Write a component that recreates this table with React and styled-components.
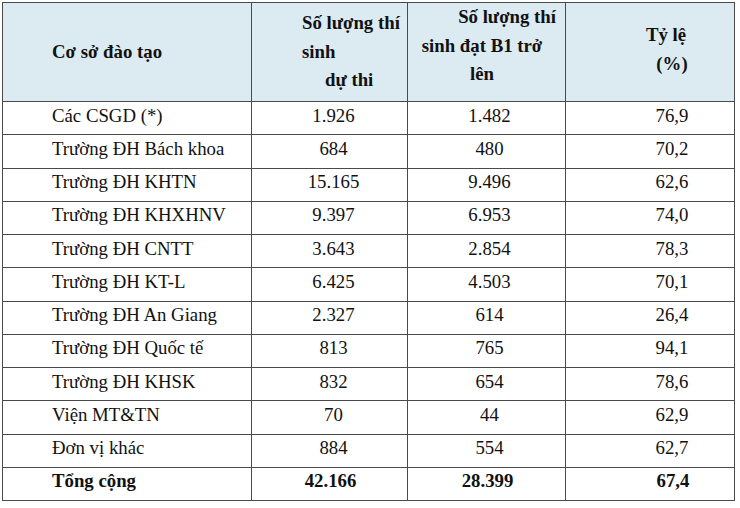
import React from 'react'
import styled, { createGlobalStyle } from 'styled-components'

const GlobalStyle = createGlobalStyle`
  body {
    margin: 0;
    background: #fff;
    font-family: "Liberation Serif", "Times New Roman", serif;
    color: #111;
  }
`

const Page = styled.div`
  padding: 2px 0 0 2px;
`

const Table = styled.table`
  border-collapse: collapse;
  table-layout: fixed;
  width: 732px;
  font-size: 18.8px;
  border: 1px solid #7a7a7a;
`

const HeadRow = styled.tr`
  height: 99px;
  background: #dceaf2;
`

const BodyRow = styled.tr`
  height: 33.25px;
  font-weight: ${({ total }) => total ? 700 : 400};
`

const HeadCell = styled.th`
  border: 1px solid #4a4a4a;
  font-weight: 700;
  padding: ${({ pad }) => pad || '0'};
  vertical-align: ${({ top }) => top ? 'top' : 'middle'};
  text-align: ${({ align }) => align || 'left'};
  line-height: 28.5px;
`

const HeadLines = styled.div`
  display: flex;
  flex-direction: column;
  align-items: ${({ align }) => align || 'flex-start'};
`

const HeadLine = styled.span`
  white-space: nowrap;
  padding-left: ${({ indent }) => indent || 0}px;
`

const Cell = styled.td`
  border: 1px solid #4a4a4a;
  padding: 0 0 4px ${({ shift }) => shift || 0}px;
  text-align: center;
  white-space: nowrap;
  line-height: 1;
`

const NameCell = styled(Cell)`
  text-align: left;
  padding-left: 49px;
`

const rows = [
  ['Các CSGD (*)', '1.926', '1.482', '76,9'],
  ['Trường ĐH Bách khoa', '684', '480', '70,2'],
  ['Trường ĐH KHTN', '15.165', '9.496', '62,6'],
  ['Trường ĐH KHXHNV', '9.397', '6.953', '74,0'],
  ['Trường ĐH CNTT', '3.643', '2.854', '78,3'],
  ['Trường ĐH KT-L', '6.425', '4.503', '70,1'],
  ['Trường ĐH An Giang', '2.327', '614', '26,4'],
  ['Trường ĐH Quốc tế', '813', '765', '94,1'],
  ['Trường ĐH KHSK', '832', '654', '78,6'],
  ['Viện MT&TN', '70', '44', '62,9'],
  ['Đơn vị khác', '884', '554', '62,7']
]

export default function App () {
  return (
    <Page>
      <GlobalStyle />
      <Table>
        <colgroup>
          <col style={{ width: 249 }} />
          <col style={{ width: 156 }} />
          <col style={{ width: 158 }} />
          <col style={{ width: 169 }} />
        </colgroup>
        <thead>
          <HeadRow>
            <HeadCell pad='0 0 0 49px'>Cơ sở đào tạo</HeadCell>
            <HeadCell pad='0 0 0 50px'>
              <HeadLines>
                <HeadLine>Số lượng thí</HeadLine>
                <HeadLine>sinh</HeadLine>
                <HeadLine indent={23}>dự thi</HeadLine>
              </HeadLines>
            </HeadCell>
            <HeadCell top pad='0 9px 0 0'>
              <HeadLines align='center'>
                <HeadLine style={{ alignSelf: 'flex-end' }}>Số lượng thí</HeadLine>
                <HeadLine>sinh đạt B1 trở</HeadLine>
                <HeadLine>lên</HeadLine>
              </HeadLines>
            </HeadCell>
            <HeadCell top pad='18px 0 0 32px'>
              <HeadLines align='center'>
                <HeadLine>Tỷ lệ</HeadLine>
                <HeadLine indent={12}>(%)</HeadLine>
              </HeadLines>
            </HeadCell>
          </HeadRow>
        </thead>
        <tbody>
          {rows.map(r => (
            <BodyRow key={r[0]}>
              <NameCell>{r[0]}</NameCell>
              <Cell shift={8}>{r[1]}</Cell>
              <Cell shift={6}>{r[2]}</Cell>
              <Cell shift={44}>{r[3]}</Cell>
            </BodyRow>
          ))}
          <BodyRow total>
            <NameCell>Tổng cộng</NameCell>
            <Cell shift={2}>42.166</Cell>
            <Cell shift={2}>28.399</Cell>
            <Cell shift={46}>67,4</Cell>
          </BodyRow>
        </tbody>
      </Table>
    </Page>
  )
}
